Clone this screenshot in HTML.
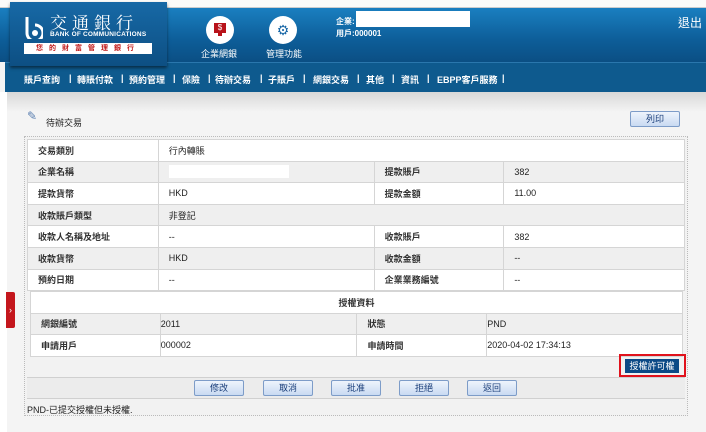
<!DOCTYPE html><html><head><meta charset="utf-8"><style>
*{margin:0;padding:0;box-sizing:border-box}
body{width:706px;height:432px;overflow:hidden;background:#f4f4f4;font-family:"Liberation Sans","Noto Sans CJK TC",sans-serif;font-size:9px;color:#222;position:relative}
.a{position:absolute}
.hdr{left:0;top:8px;width:706px;height:54px;background:linear-gradient(#1a7fc0,#0d5d98 60%,#0b4f84)}
.nav{left:5px;top:62px;width:701px;height:30px;background:#0e5a8e;border-top:1px solid #2a77ad}
.nav span{color:#fff;font-weight:bold;font-size:9px;position:absolute;top:10px}
.logo{left:10px;top:2px;width:157px;height:64px;background:linear-gradient(#1769a6,#0d4f83);box-shadow:0 2px 3px rgba(0,0,0,.5)}
.btn{position:absolute;height:16px;border:1px solid #7d9cc8;background:linear-gradient(#eef4fc,#c9daf2);color:#1a3e7a;font-size:9px;text-align:center;line-height:14px;border-radius:2px}
table{border-collapse:collapse;position:absolute}
td{border:1px solid #d5d5d5;font-size:9px;padding-left:10px;height:21.6px;background:#fff}
td.l{font-weight:bold;color:#333}
tr.g td{background:#efefef}
</style></head><body>
<div class="a" style="left:0;top:0;width:706px;height:8px;background:#fbfbf9;border-bottom:1px solid #ccc"></div>
<div class="a hdr"></div>
<div class="a nav">
<span style="left:19px">賬戶查詢</span><span style="left:64px">|</span><span style="left:72px">轉賬付款</span><span style="left:116px">|</span><span style="left:124px">預約管理</span><span style="left:168px">|</span><span style="left:177px">保險</span><span style="left:203px">|</span><span style="left:210px">待辦交易</span><span style="left:255px">|</span><span style="left:263px">子賬戶</span><span style="left:298px">|</span><span style="left:308px">網銀交易</span><span style="left:352px">|</span><span style="left:361px">其他</span><span style="left:387px">|</span><span style="left:396px">資訊</span><span style="left:422px">|</span><span style="left:432px">EBPP客戶服務</span><span style="left:497px">|</span>
</div>
<div class="a logo">
<svg class="a" style="left:13px;top:13px" width="20" height="24" viewBox="0 0 20 24"><path d="M4 2v16a8 8 0 1 0 8-8" fill="none" stroke="#fff" stroke-width="3"/><circle cx="12" cy="18" r="3" fill="#fff"/></svg>
<div class="a" style="left:40px;top:10px;color:#fff;font-family:'Noto Serif CJK SC',serif;font-size:17px;letter-spacing:5px;line-height:20px">交通銀行</div>
<div class="a" style="left:40px;top:29px;color:#fff;font-size:6.5px;font-weight:bold;letter-spacing:.2px">BANK OF COMMUNICATIONS</div>
<div class="a" style="left:14px;top:41px;width:128px;height:11px;background:#fff;color:#c01818;font-size:7px;line-height:11px;text-align:center;letter-spacing:6px;font-weight:bold">您的財富管理銀行</div>
</div>
<div class="a" style="left:206px;top:16px;width:28px;height:28px;border-radius:50%;background:#fff"><div class="a" style="left:8px;top:7px;width:12px;height:10px;background:#b8121a;color:#fff;font-size:8px;text-align:center;line-height:10px">$</div><div class="a" style="left:12px;top:17px;width:4px;height:3px;background:#b8121a"></div></div>
<div class="a" style="left:269px;top:16px;width:28px;height:28px;border-radius:50%;background:#fff;color:#1766a6;font-size:14px;text-align:center;line-height:28px">⚙</div>
<div class="a" style="left:201px;top:47px;color:#fff;font-size:9px">企業網銀</div>
<div class="a" style="left:266px;top:47px;color:#fff;font-size:9px">管理功能</div>
<div class="a" style="left:336px;top:16px;color:#fff;font-size:8px;font-weight:bold">企業:</div>
<div class="a" style="left:356px;top:11px;width:114px;height:16px;background:#fff"></div>
<div class="a" style="left:336px;top:28px;color:#fff;font-size:8px;font-weight:bold">用戶:000001</div>
<div class="a" style="left:678px;top:14px;color:#fff;font-size:12px">退出</div>
<div class="a" style="left:7px;top:92px;width:699px;height:20px;background:linear-gradient(#d8d8d8,#f4f4f4)"></div>
<div class="a" style="left:0;top:92px;width:7px;height:340px;background:#fff"></div>
<div class="a" style="left:6px;top:292px;width:9px;height:36px;background:#c4171d;border-radius:0 2px 2px 0;color:#fff;font-size:9px;line-height:36px;text-align:center">›</div>
<div class="a" style="left:27px;top:109px;font-size:12px;color:#5a7fb0">✎</div>
<div class="a" style="left:46px;top:116px;font-size:9px">待辦交易</div>
<div class="btn" style="left:630px;top:111px;width:50px">列印</div>
<div class="a" style="left:24px;top:136px;width:664px;height:280px;border:1px dotted #bbb;background:#f2f2f2"></div>
<table style="left:27px;top:139px;width:658px"><colgroup><col width="131"><col width="216"><col width="130"><col width="181"></colgroup>
<tr><td class="l">交易類別</td><td colspan="3">行內轉賬</td></tr>
<tr class="g"><td class="l">企業名稱</td><td><div style="width:120px;height:13px;background:#fff"></div></td><td class="l">提款賬戶</td><td>382</td></tr>
<tr><td class="l">提款貨幣</td><td>HKD</td><td class="l">提款金額</td><td>11.00</td></tr>
<tr class="g"><td class="l">收款賬戶類型</td><td colspan="3">非登記</td></tr>
<tr><td class="l">收款人名稱及地址</td><td>--</td><td class="l">收款賬戶</td><td>382</td></tr>
<tr class="g"><td class="l">收款貨幣</td><td>HKD</td><td class="l">收款金額</td><td>--</td></tr>
<tr><td class="l">預約日期</td><td>--</td><td class="l">企業業務編號</td><td>--</td></tr>
</table>
<table style="left:30px;top:291px;width:653px"><colgroup><col width="130"><col width="197"><col width="130"><col width="196"></colgroup>
<tr><td colspan="4" class="l" style="text-align:center;padding:0;background:#fff">授權資料</td></tr>
<tr class="g"><td class="l">網銀編號</td><td style="padding-left:0">2011</td><td class="l">狀態</td><td style="padding-left:0">PND</td></tr>
<tr><td class="l">申請用戶</td><td style="padding-left:0">000002</td><td class="l">申請時間</td><td style="padding-left:0">2020-04-02 17:34:13</td></tr>
</table>
<div class="a" style="left:619px;top:354px;width:67px;height:23px;border:2px solid #e0121c"></div>
<div class="a" style="left:625px;top:359px;width:54px;height:14px;background:#0c4a86;color:#fff;font-size:9px;text-align:center;line-height:14px">授權許可權</div>
<div class="a" style="left:27px;top:377px;width:658px;height:22px;background:#ececec;border-top:1px solid #d0d0d0;border-bottom:1px solid #d0d0d0"></div>
<div class="btn" style="left:194px;top:380px;width:50px">修改</div>
<div class="btn" style="left:263px;top:380px;width:50px">取消</div>
<div class="btn" style="left:331px;top:380px;width:50px">批准</div>
<div class="btn" style="left:399px;top:380px;width:50px">拒絕</div>
<div class="btn" style="left:467px;top:380px;width:50px">返回</div>
<div class="a" style="left:27px;top:403px;font-size:9px">PND-已提交授權但未授權.</div>
</body></html>
